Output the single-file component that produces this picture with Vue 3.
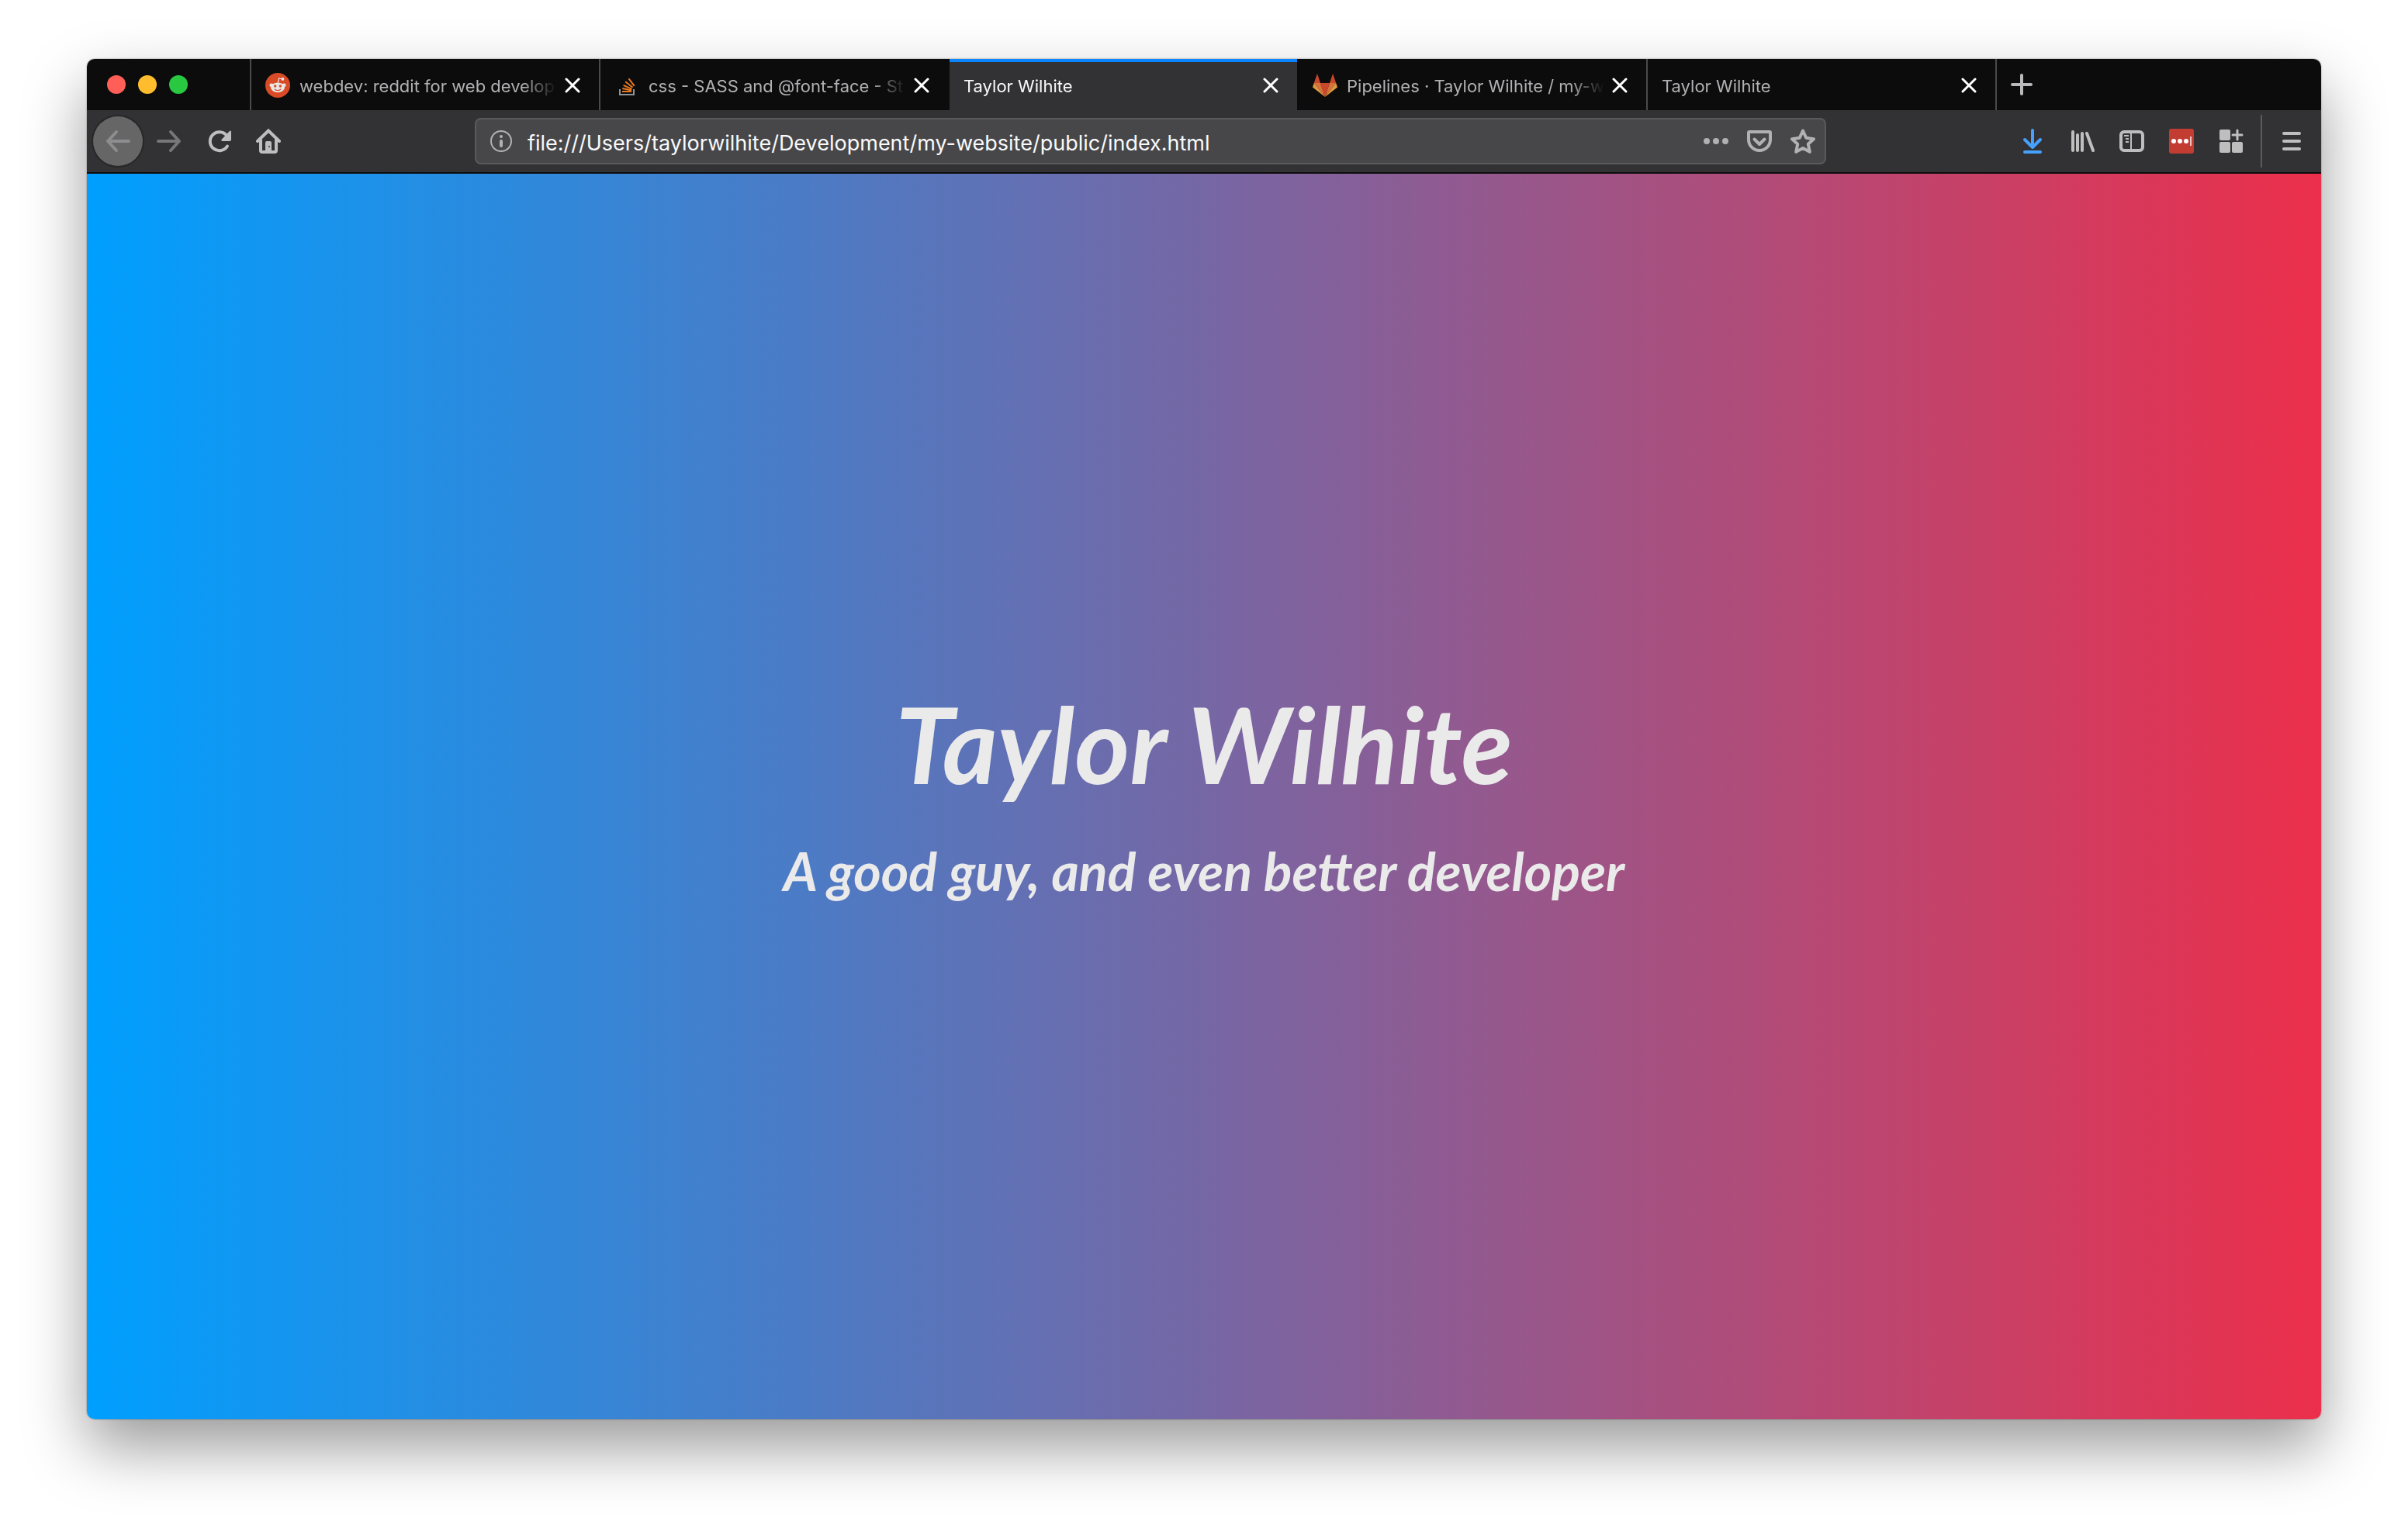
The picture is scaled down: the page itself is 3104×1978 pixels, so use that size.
<script setup>
import { ref } from 'vue'

const tabs = [
  { title: 'webdev: reddit for web develop', icon: 'reddit' },
  { title: 'css - SASS and @font-face - St', icon: 'stack' },
  { title: 'Taylor Wilhite', active: true },
  { title: 'Pipelines · Taylor Wilhite / my-w', icon: 'gitlab' },
  { title: 'Taylor Wilhite' },
]
const address = ref('file:///Users/taylorwilhite/Development/my-website/public/index.html')
</script>

<template>
  <div class="desktop">
    <div class="window">
      <header class="tabstrip">
        <div class="lights">
          <button class="light red" aria-label="Close window"></button>
          <button class="light yellow" aria-label="Minimize window"></button>
          <button class="light green" aria-label="Zoom window"></button>
        </div>
        <div v-for="(tab, i) in tabs" :key="i" class="tab" :class="{ active: tab.active, before: tabs[i + 1]?.active }">
          <svg v-if="tab.icon === 'reddit'" class="favicon" viewBox="0 0 32 32">
            <circle cx="16" cy="16" r="16" fill="#d84b26" />
            <g fill="#e9e6e4">
              <circle cx="7.8" cy="15.8" r="2.4" />
              <circle cx="24.2" cy="15.8" r="2.4" />
              <ellipse cx="16" cy="18.8" rx="9" ry="6.4" />
              <circle cx="22.4" cy="8" r="1.9" />
            </g>
            <path d="M16.2 12.6l1.4-5.6 4.4 1" fill="none" stroke="#e9e6e4" stroke-width="1.2" />
            <circle cx="12.7" cy="17" r="1.7" fill="#d84b26" />
            <circle cx="19.3" cy="17" r="1.7" fill="#d84b26" />
            <path d="M12.4 21.2q3.6 2.8 7.2 0" fill="none" stroke="#d84b26" stroke-width="1.2" stroke-linecap="round" />
          </svg>
          <svg v-else-if="tab.icon === 'stack'" class="favicon" viewBox="0 0 32 32" fill="none" stroke-width="2">
            <path d="M7 21v7h18v-7" stroke="#8f9497" />
            <path d="M10 24h12M10.3 20l11.8 2.4M11.6 15.8l10.9 5.1M14.2 11.2l9.3 7.6M18.5 7.3l7.2 9.5" stroke="#e87922" />
          </svg>
          <svg v-else-if="tab.icon === 'gitlab'" class="favicon" viewBox="0 0 32 32">
            <path d="M16 31L10 13h12z" fill="#c9482c" />
            <path d="M6 1L1.800 13H10zM26 1l4.200 12H22z" fill="#c9482c" />
            <path d="M16 31L10 13H1.800zM16 31l6-18h8.200z" fill="#d9713a" />
            <path d="M1.800 13L0 18.500 16 31zM30.200 13L32 18.500 16 31z" fill="#dd9a42" />
          </svg>
          <span class="label">{{ tab.title }}</span>
          <button class="close" :aria-label="'Close ' + tab.title">
            <svg viewBox="0 0 20 20"><path d="M2 2l16 16M18 2L2 18" fill="none" stroke="#fff" stroke-width="3" stroke-linecap="round" /></svg>
          </button>
        </div>
        <button class="newtab" aria-label="New tab">
          <svg viewBox="0 0 28 28"><path d="M14 2v24M2 14h24" fill="none" stroke="#b9b9bb" stroke-width="4" stroke-linecap="round" /></svg>
        </button>
      </header>

      <nav class="toolbar">
        <button class="tool back" aria-label="Back">
          <svg viewBox="0 0 32 32" class="line"><path d="M30 16H3M14 4L3 16l11 12" stroke="#8d8d8f" /></svg>
        </button>
        <button class="tool" aria-label="Forward">
          <svg viewBox="0 0 32 32" class="line"><path d="M2 16h27M18 4l11 12-11 12" stroke="#77777a" /></svg>
        </button>
        <button class="tool" aria-label="Reload">
          <svg viewBox="0 0 32 32">
            <path d="M27 22.500A12 12 0 1 1 26 8.500" fill="none" stroke="#bebebf" stroke-width="4" stroke-linecap="round" />
            <path d="M32 3.500V14q0 2-2 2H20.500q-2-.5-1-2L30 3q1.500-1 2 .5z" fill="#bebebf" />
          </svg>
        </button>
        <button class="tool" aria-label="Home">
          <svg viewBox="0 0 32 32">
            <path d="M2 16L16 2.500 30 16M6 14v14q0 2 2 2h16q2 0 2-2V14" class="solid" />
            <path d="M12 31V18q0-2 2-2h4q2 0 2 2v13z" fill="#bebebf" />
            <circle cx="17" cy="23" r="1" fill="#323234" />
          </svg>
        </button>
        <div class="address">
          <svg viewBox="0 0 28 28" class="info">
            <circle cx="14" cy="14" r="13" fill="none" stroke="#b1b1b3" stroke-width="2" />
            <circle cx="14" cy="8" r="2" fill="#b1b1b3" />
            <path d="M14 14v6" stroke="#b1b1b3" stroke-width="4" stroke-linecap="round" />
          </svg>
          <input v-model="address" type="text" aria-label="Address" spellcheck="false" />
          <button class="action" aria-label="Page actions">
            <svg viewBox="0 0 32 32" fill="#b1b1b3"><circle cx="4" cy="16" r="4" /><circle cx="16" cy="16" r="4" /><circle cx="28" cy="16" r="4" /></svg>
          </button>
          <button class="action" aria-label="Save to Pocket">
            <svg viewBox="0 0 32 32" class="line" stroke="#b1b1b3">
              <path d="M3 4h26q1 0 1 1v9a14 14 0 0 1-28 0V5q0-1 1-1z" />
              <path d="M9.500 13.500L16 20l6.500-6.500" />
            </svg>
          </button>
          <button class="action" aria-label="Bookmark this page">
            <svg viewBox="0 0 32 32" class="line" stroke="#b1b1b3">
              <path d="M16 2.500l4.200 9.300 9.800 1.400-7.200 6.600 2 10L16 25l-8.800 4.800 2-10L2 13.200l9.800-1.400z" />
            </svg>
          </button>
        </div>
        <button class="tool" aria-label="Downloads">
          <svg viewBox="0 0 32 32" class="line" stroke="#45a1ff"><path d="M16 2v22M6 14l10 10 10-10M6 30h20" /></svg>
        </button>
        <button class="tool" aria-label="Library">
          <svg viewBox="0 0 32 32" class="line" stroke="#bebebf"><path d="M4 4v24M10 8v20M16 6v22M22 6l8 22" /></svg>
        </button>
        <button class="tool" aria-label="Sidebars">
          <svg viewBox="0 0 32 32" fill="none" stroke="#bebebf">
            <rect x="2" y="4" width="28" height="24" rx="4" stroke-width="4" />
            <path d="M15 4v24M6 9h6M8 13h4M8 17h4" stroke-width="2" />
          </svg>
        </button>
        <button class="tool" aria-label="Password manager">
          <svg viewBox="0 0 32 32">
            <rect width="32" height="32" rx="3" fill="#c33c32" />
            <g fill="#fff"><circle cx="6" cy="16" r="3" /><circle cx="14" cy="16" r="3" /><circle cx="22" cy="16" r="3" /></g>
            <path d="M28 10v12" stroke="#efc4c1" stroke-width="2" />
          </svg>
        </button>
        <button class="tool" aria-label="Extensions">
          <svg viewBox="0 0 32 32" fill="#bebebf">
            <rect x="1" y="1" width="14" height="14" rx="2" />
            <rect x="1" y="17" width="14" height="14" rx="2" />
            <rect x="17" y="17" width="14" height="14" rx="2" />
            <path d="M24 2v12M18 8h12" stroke="#bebebf" stroke-width="3" stroke-linecap="round" />
          </svg>
        </button>
        <span class="divider"></span>
        <button class="tool" aria-label="Menu">
          <svg viewBox="0 0 32 32" class="line" stroke="#bebebf"><path d="M6 6h20M6 16h20M6 26h20" /></svg>
        </button>
      </nav>

      <main class="page">
        <h1>Taylor Wilhite</h1>
        <h2>A good guy, and even better developer</h2>
      </main>
    </div>
  </div>
</template>

<style>
body {
  background: #fff;
}
</style>

<style scoped>
* {
  box-sizing: border-box;
}
.desktop {
  display: flex;
  min-height: 100vh;
  padding: 76px 112px 148px;
  font-family: Inter, "Liberation Sans", sans-serif;
}
.window {
  display: flex;
  flex: 1;
  min-width: 0;
  flex-direction: column;
  overflow: hidden;
  border-radius: 10px;
  box-shadow: 0 0 2px rgba(0, 0, 0, 0.5), 0 36px 80px rgba(0, 0, 0, 0.4);
}
button {
  padding: 0;
  border: 0;
  background: none;
}
svg {
  display: block;
}
.tabstrip {
  display: flex;
  height: 66px;
  background: #0c0c0d;
}
.lights {
  display: flex;
  flex: none;
  align-items: center;
  gap: 16px;
  width: 212px;
  padding-left: 26px;
  border-right: 2px solid #4a4a4b;
}
.light {
  width: 24px;
  height: 24px;
  border-radius: 50%;
}
.red {
  background: #ff5f57;
}
.yellow {
  background: #ffbd2e;
}
.green {
  background: #28c940;
}
.tab {
  display: flex;
  flex: 0 1 450px;
  align-items: center;
  min-width: 0;
  padding: 2px 24px 0 18px;
  border-right: 2px solid #4a4a4b;
  color: #b1b1b3;
  font-size: 22px;
  line-height: 28px;
}
.tab.before {
  border-color: #0c0c0d;
}
.tab.active {
  border-color: #0c0c0d;
  background: #323234;
  background-clip: padding-box;
  box-shadow: inset 0 4px #0a84ff;
  color: #f9f9fa;
}
.favicon {
  flex: none;
  width: 32px;
  height: 32px;
  margin-right: 12px;
}
.label {
  flex: 1;
  min-width: 0;
  padding-top: 2px;
  overflow: hidden;
  white-space: nowrap;
  -webkit-mask-image: linear-gradient(to left, transparent, #000 44px);
  mask-image: linear-gradient(to left, transparent, #000 44px);
}
.close {
  flex: none;
  width: 20px;
  height: 20px;
  margin-left: 10px;
}
.newtab {
  width: 28px;
  margin-left: 18px;
}
.toolbar {
  display: flex;
  align-items: center;
  height: 82px;
  padding: 0 6px 0 8px;
  border-bottom: 2px solid #0c0c0d;
  background: #323234;
}
.tool {
  display: flex;
  flex: none;
  align-items: center;
  justify-content: center;
  width: 64px;
  height: 64px;
}
.tool svg,
.action svg {
  width: 32px;
  height: 32px;
}
.back {
  border-radius: 50%;
  margin-right: 2px;
  background: #666667;
  box-shadow: 0 0 0 2px #272728;
}
.line {
  fill: none;
  stroke-width: 4px;
  stroke-linecap: round;
  stroke-linejoin: round;
}
.solid {
  fill: none;
  stroke: #bebebf;
  stroke-width: 4px;
  stroke-linecap: round;
}
.address {
  display: flex;
  flex: 1;
  align-items: center;
  gap: 24px;
  min-width: 0;
  height: 60px;
  margin: 0 234px;
  padding: 0 12px 0 18px;
  border: 2px solid #5a5a5c;
  border-radius: 8px;
  background: #474749;
}
.info {
  flex: none;
  width: 28px;
  height: 28px;
}
.address input {
  flex: 1;
  min-width: 0;
  height: 40px;
  margin-left: -4px;
  padding: 4px 0 0;
  border: 0;
  outline: 0;
  background: none;
  color: #f9f9fa;
  font: 27px/36px Inter, "Liberation Sans", sans-serif;
}
.action {
  flex: none;
}
.divider {
  width: 2px;
  height: 68px;
  margin: 0 6px;
  background: #5a5a5c;
}
.page {
  display: flex;
  flex: 1;
  flex-direction: column;
  justify-content: center;
  background: linear-gradient(90deg, #009fff, #ec2f4b);
  color: #eaeaea;
  font-family: Lato, "Open Sans", sans-serif;
  font-style: italic;
  text-align: center;
}
h1,
h2 {
  margin: 0;
  font-weight: 700;
}
h1 {
  font-size: 136px;
  line-height: 192px;
}
h2 {
  font-size: 68px;
  line-height: 136px;
}
</style>
